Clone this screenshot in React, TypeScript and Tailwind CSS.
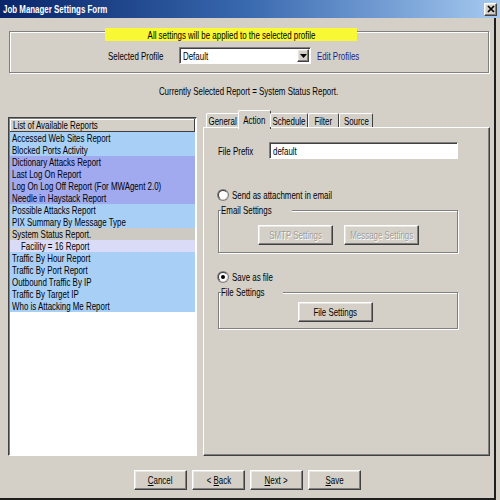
import React from 'react';

const FONT = "font-['Liberation_Sans',Arial,sans-serif]";

function T({ children, center = false, className = '' }: { children: React.ReactNode; center?: boolean; className?: string }) {
  return (
    <span className={`inline-block whitespace-nowrap scale-x-[0.72] ${center ? 'origin-center' : 'origin-left'} ${className}`}>
      {children}
    </span>
  );
}

const RAISED =
  'bg-[#d4d0c8] border border-t-white border-l-white border-r-[#404040] border-b-[#404040] shadow-[inset_-1px_-1px_0_#808080,inset_1px_1px_0_#e8e6e0]';
const SUNKEN =
  'bg-white border border-t-[#808080] border-l-[#808080] border-b-white border-r-white shadow-[inset_1px_1px_0_#404040]';
const GROUP = 'border border-[#808080] shadow-[inset_1px_1px_0_#ffffff,1px_1px_0_#ffffff]';

function Button({ children, w, disabled = false }: { children: React.ReactNode; w: string; disabled?: boolean }) {
  return (
    <div className={`${RAISED} ${w} h-[20px] flex items-center justify-center`}>
      <T center className={disabled ? 'text-[#a19e97] [text-shadow:1px_1px_0_#ffffff]' : 'text-black'}>
        {children}
      </T>
    </div>
  );
}

function Radio({ checked }: { checked?: boolean }) {
  return (
    <div className="w-[12px] h-[12px] rounded-full bg-[#808080] p-[1px] shrink-0">
      <div className="w-full h-full rounded-full bg-white border border-[#404040] border-r-[#d4d0c8] border-b-[#d4d0c8] flex items-center justify-center">
        {checked ? <div className="w-[4px] h-[4px] rounded-full bg-black" /> : null}
      </div>
    </div>
  );
}

const BLUE = 'bg-[#a8cff5]';
const PERI = 'bg-[#a1a9ef]';
const GRAY = 'bg-[#cdcac3]';
const LAV = 'bg-[#d9dbf7]';

const items: { t: string; c: string; indent?: boolean }[] = [
  { t: 'Accessed Web Sites Report', c: BLUE },
  { t: 'Blocked Ports Activity', c: BLUE },
  { t: 'Dictionary Attacks Report', c: PERI },
  { t: 'Last Log On Report', c: PERI },
  { t: 'Log On Log Off Report (For MWAgent 2.0)', c: PERI },
  { t: 'Needle in Haystack Report', c: PERI },
  { t: 'Possible Attacks Report', c: BLUE },
  { t: 'PIX Summary By Message Type', c: BLUE },
  { t: 'System Status Report.', c: GRAY },
  { t: 'Facility = 16 Report', c: LAV, indent: true },
  { t: 'Traffic By Hour Report', c: BLUE },
  { t: 'Traffic By Port Report', c: BLUE },
  { t: 'Outbound Traffic By IP', c: BLUE },
  { t: 'Traffic By Target IP', c: BLUE },
  { t: 'Who is Attacking Me Report', c: BLUE },
];

const tabs = [
  { t: 'General', w: 'w-[33px]' },
  { t: 'Action', w: 'w-[33px]', sel: true },
  { t: 'Schedule', w: 'w-[38px]' },
  { t: 'Filter', w: 'w-[31px]' },
  { t: 'Source', w: 'w-[34px]' },
];

export default function App() {
  return (
    <div className={`w-[500px] h-[500px] bg-[#d4d0c8] flex flex-col overflow-hidden text-[11px] leading-[12px] text-black ${FONT}`}>
      {/* Title bar */}
      <div className="h-[18px] shrink-0 flex items-center justify-between bg-linear-to-r from-[#0a246a] via-[#3a6ab0] to-[#a6caf0] pl-[3px] pr-[3px]">
        <T className="text-white font-bold">Job Manager Settings Form</T>
        <div className={`${RAISED} w-[13px] h-[13px] flex items-center justify-center`}>
          <svg width="8" height="8" viewBox="0 0 8 8">
            <path d="M1 1 L7 7 M7 1 L1 7" stroke="#000" strokeWidth="1.7" />
          </svg>
        </div>
      </div>

      {/* Body */}
      <div className="flex-1 flex flex-col w-[496px] border-r-2 border-b-2 border-[#1e1e1e] pl-[8px] pr-[4px]">
        {/* Profile group */}
        <div className={`relative mt-[13px] mx-[1px] h-[42px] shrink-0 ${GROUP}`}>
          <div className="absolute left-[95px] -top-[4px] w-[252px] h-[13px] bg-[#f8f834] flex items-center justify-center">
            <T center>All settings will be applied to the selected profile</T>
          </div>
          <div className="pt-[15px] flex items-center">
            <div className="ml-[98px] w-[71px]">
              <T>Selected Profile</T>
            </div>
            <div className={`${SUNKEN} w-[132px] h-[17px] flex items-center justify-between pl-[3px] pr-[1px]`}>
              <T>Default</T>
              <div className={`${RAISED} w-[12px] h-[13px] flex items-center justify-center`}>
                <svg width="7" height="4" viewBox="0 0 7 4">
                  <path d="M0 0 H7 L3.5 4 Z" fill="#000" />
                </svg>
              </div>
            </div>
            <div className="ml-[6px] text-[#1c1c8e] underline">
              <T>Edit Profiles</T>
            </div>
          </div>
        </div>

        <div className="mt-[12px] h-[12px] flex justify-center shrink-0">
          <T center>Currently Selected Report = System Status Report.</T>
        </div>

        {/* Main */}
        <div className="mt-[13px] h-[346px] flex shrink-0">
          {/* List */}
          <div className="mt-[7px] w-[189px] flex flex-col border border-t-[#404040] border-l-[#404040] border-r-white border-b-white shadow-[inset_1px_1px_0_#808080] bg-white p-[1px]">
            <div className="h-[13px] shrink-0 bg-[#d4d0c8] border-b border-r border-[#404040] shadow-[inset_1px_1px_0_#ffffff] pl-[3px] flex items-center">
              <T>List of Available Reports</T>
            </div>
            {items.map((it) => (
              <div key={it.t} className={`h-[12px] ${it.c} ${it.indent ? 'pl-[11px]' : 'pl-[2px]'} flex items-center`}>
                <T>{it.t}</T>
              </div>
            ))}
            <div className="flex-1 bg-white" />
          </div>

          {/* Tabs */}
          <div className="ml-[6px] flex-1 flex flex-col">
            <div className="h-[17px] flex items-end pl-[3px] relative z-10">
              {tabs.map((tb) =>
                tb.sel ? (
                  <div
                    key={tb.t}
                    className={`${tb.w} h-[19px] -mb-[2px] -mx-[1px] bg-[#d4d0c8] border-t border-l border-r border-t-white border-l-white border-r-[#404040] rounded-t-[2px] flex items-start pt-[3px] justify-center`}
                  >
                    <T center>{tb.t}</T>
                  </div>
                ) : (
                  <div
                    key={tb.t}
                    className={`${tb.w} h-[14px] bg-[#d4d0c8] border-t border-l border-r border-t-white border-l-white border-r-[#404040] rounded-t-[2px] flex items-center justify-center`}
                  >
                    <T center>{tb.t}</T>
                  </div>
                ),
              )}
            </div>
            <div className="flex-1 bg-[#d4d0c8] border border-t-white border-l-white border-r-[#404040] border-b-[#404040] shadow-[inset_-1px_-1px_0_#808080] flex flex-col">
              <div className="mt-[14px] h-[17px] flex items-center">
                <div className="ml-[14px] w-[51px]">
                  <T>File Prefix</T>
                </div>
                <div className={`${SUNKEN} w-[189px] h-[17px] flex items-center pl-[3px]`}>
                  <T>default</T>
                </div>
              </div>

              <div className="mt-[30px] h-[12px] flex items-center pl-[13px]">
                <Radio />
                <div className="ml-[3px]">
                  <T>Send as attachment in email</T>
                </div>
              </div>

              <div className={`relative mt-[9px] ml-[14px] w-[240px] h-[43px] ${GROUP}`}>
                <div className="absolute left-[2px] -top-[7px] bg-[#d4d0c8] pr-[1px]">
                  <T>Email Settings</T>
                </div>
                <div className="pt-[14px] pl-[39px] flex gap-[11px]">
                  <Button w="w-[75px]" disabled>
                    SMTP Settings
                  </Button>
                  <Button w="w-[75px]" disabled>
                    Message Settings
                  </Button>
                </div>
              </div>

              <div className="mt-[18px] h-[12px] flex items-center pl-[13px]">
                <Radio checked />
                <div className="ml-[3px]">
                  <T>Save as file</T>
                </div>
              </div>

              <div className={`relative mt-[9px] ml-[14px] w-[240px] h-[37px] ${GROUP}`}>
                <div className="absolute left-[2px] -top-[7px] bg-[#d4d0c8] pr-[1px]">
                  <T>File Settings</T>
                </div>
                <div className="pt-[9px] pl-[79px] flex">
                  <Button w="w-[75px]">File Settings</Button>
                </div>
              </div>
            </div>
          </div>
        </div>

        {/* Bottom buttons */}
        <div className="mt-[14px] flex justify-center gap-[5px] pr-[3px]">
          <Button w="w-[53px]">
            <span className="underline">C</span>ancel
          </Button>
          <Button w="w-[53px]">
            &lt; <span className="underline">B</span>ack
          </Button>
          <Button w="w-[53px]">
            <span className="underline">N</span>ext &gt;
          </Button>
          <Button w="w-[53px]">
            <span className="underline">S</span>ave
          </Button>
        </div>
      </div>
    </div>
  );
}
